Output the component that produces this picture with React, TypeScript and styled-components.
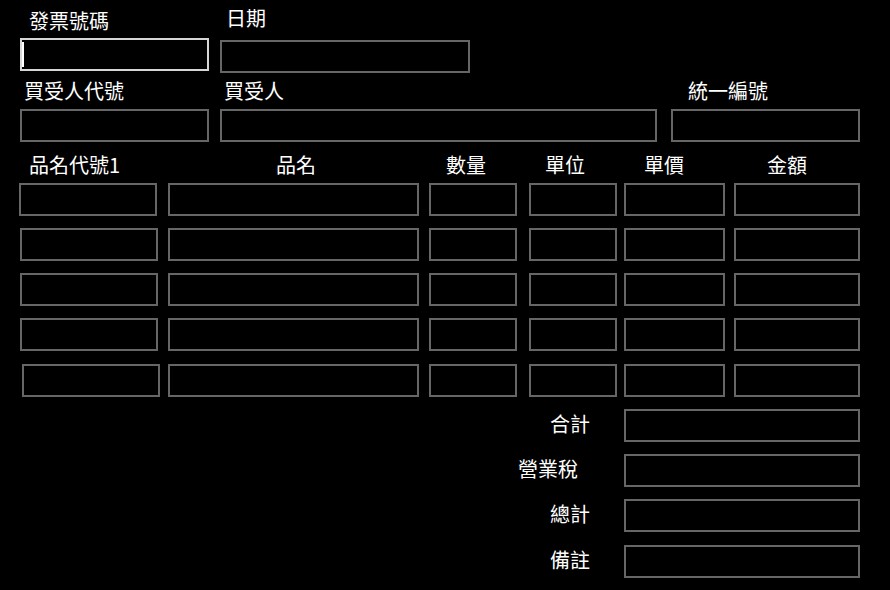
import React from 'react';
import styled, { createGlobalStyle } from 'styled-components';

const GlobalStyle = createGlobalStyle`
  html, body {
    margin: 0;
    padding: 0;
    background: #000;
  }
  body {
    font-family: 'Noto Sans CJK TC', 'Noto Sans', sans-serif;
    color: #fff;
  }
`

const Page = styled.div`
  width: 890px;
  height: 590px;
  background: #000;
  display: flex;
  flex-direction: column;
  overflow: hidden;
`

const FieldRow = styled.div<{ $pl?: number }>`
  display: flex;
  flex-direction: row;
  align-items: flex-start;
  padding-left: ${p => p.$pl ?? 20}px;
`

const Field = styled.div<{ $mr?: number }>`
  display: flex;
  flex-direction: column;
  margin-right: ${p => p.$mr ?? 0}px;
`

const Label = styled.div<{ $ml?: number; $mt?: number; $mb?: number }>`
  font-size: 20px;
  line-height: 24px;
  height: 24px;
  white-space: nowrap;
  margin-left: ${p => p.$ml ?? 0}px;
  margin-top: ${p => p.$mt ?? 0}px;
  margin-bottom: ${p => p.$mb ?? 0}px;
`

const TextBox = styled.div<{ $w: number; $ml?: number; $mt?: number; $focused?: boolean }>`
  box-sizing: border-box;
  width: ${p => p.$w}px;
  height: 33px;
  margin-left: ${p => p.$ml ?? 0}px;
  margin-top: ${p => p.$mt ?? 0}px;
  border: 2px solid ${p => (p.$focused ? '#d6d6d6' : '#666666')};
  background: #000;
  display: flex;
  align-items: center;
`

const Caret = styled.span`
  display: block;
  width: 2px;
  height: 25px;
  background: #fff;
`

const Table = styled.div`
  display: flex;
  flex-direction: column;
  padding-left: 19px;
`

const cols = '149px 261px 100px 95px 110px 127px';

const HeaderRow = styled.div`
  display: grid;
  grid-template-columns: ${cols};
  margin-top: 11px;
  margin-bottom: 6px;
`

const ItemRows = styled.div`
  display: flex;
  flex-direction: column;
  gap: 12px;
`

const ItemRow = styled.div<{ $mt?: number }>`
  display: grid;
  grid-template-columns: ${cols};
  margin-top: ${p => p.$mt ?? 0}px;
`

const Totals = styled.div`
  display: grid;
  grid-template-columns: 590px 236px;
  column-gap: 34px;
  row-gap: 12px;
  align-items: center;
  margin-top: 12px;
`

const TotalLabel = styled.div<{ $mr?: number; $mt?: number }>`
  font-size: 20px;
  line-height: 24px;
  text-align: right;
  padding-right: ${p => p.$mr ?? 0}px;
  margin-top: ${p => p.$mt ?? 0}px;
  margin-bottom: 3px;
`

const headers = [
  { text: '品名代號1', ml: 10 },
  { text: '品名', ml: 108 },
  { text: '數量', ml: 17 },
  { text: '單位', ml: 16 },
  { text: '單價', ml: 20 },
  { text: '金額', ml: 33 },
];

const widths = [138, 251, 88, 88, 101, 126];
const firstOffsets = [0, 1, 1, 1, 3];

const totals = [
  { text: '合計', mr: 0, mt: 0 },
  { text: '營業稅', mr: 12, mt: 0 },
  { text: '總計', mr: 0, mt: 0 },
  { text: '備註', mr: 0, mt: 1 },
];

const App = () => {
  return (
    <>
      <GlobalStyle />
      <Page>
        <FieldRow>
          <Field $mr={11}>
            <Label $ml={9} $mt={9} $mb={5}>發票號碼</Label>
            <TextBox $w={189} $focused>
              <Caret />
            </TextBox>
          </Field>
          <Field>
            <Label $ml={6} $mt={6} $mb={10}>日期</Label>
            <TextBox $w={250} />
          </Field>
        </FieldRow>

        <FieldRow>
          <Field $mr={11}>
            <Label $ml={4} $mt={6} $mb={6}>買受人代號</Label>
            <TextBox $w={189} />
          </Field>
          <Field $mr={14}>
            <Label $ml={4} $mt={6} $mb={6}>買受人</Label>
            <TextBox $w={437} />
          </Field>
          <Field>
            <Label $ml={17} $mt={6} $mb={6}>統一編號</Label>
            <TextBox $w={189} />
          </Field>
        </FieldRow>

        <Table>
          <HeaderRow>
            {headers.map(h => (
              <Label key={h.text} $ml={h.ml}>{h.text}</Label>
            ))}
          </HeaderRow>
          <ItemRows>
            {firstOffsets.map((off, r) => (
              <ItemRow key={r} $mt={r === 4 ? 1 : 0}>
                {widths.map((w, c) => (
                  <TextBox key={c} $w={w} $ml={c === 0 ? off : 0} />
                ))}
              </ItemRow>
            ))}
          </ItemRows>
        </Table>

        <Totals>
          {totals.map(t => (
            <React.Fragment key={t.text}>
              <TotalLabel $mr={t.mr} $mt={t.mt}>{t.text}</TotalLabel>
              <TextBox $w={236} $mt={t.mt} />
            </React.Fragment>
          ))}
        </Totals>
      </Page>
    </>
  );
};

export default App;
